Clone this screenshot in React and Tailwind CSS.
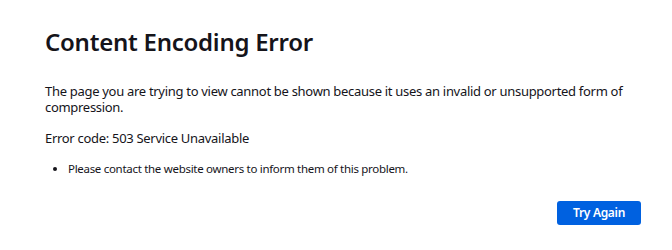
export default function App() {
  return (
    <div className="w-[672px] h-[250px] bg-white text-[#15141a] overflow-hidden" style={{ fontFamily: '"Noto Sans", "Open Sans", sans-serif' }}>
      <div className="ml-[45px] w-[596px] pt-[26px]">
        <h1 className="text-[24px] leading-[32px] font-semibold tracking-[-0.25px]">Content Encoding Error</h1>
        <p className="mt-[25px] text-[13px] leading-[16px] tracking-[-0.3px]">
          The page you are trying to view cannot be shown because it uses an invalid or unsupported form of compression.
        </p>
        <p className="mt-[15px] text-[13px] leading-[17px] tracking-[-0.3px]">Error code: 503 Service Unavailable</p>
        <ul className="mt-[14px] list-disc pl-[23px] text-[11.5px] leading-[15px] tracking-[-0.3px]">
          <li>Please contact the website owners to inform them of this problem.</li>
        </ul>
        <div className="flex justify-end mt-[25px]">
          <button className="w-[84px] h-[24px] rounded-[3px] bg-[#0061e0] text-white text-[12px] font-semibold tracking-[-0.3px]">Try Again</button>
        </div>
      </div>
    </div>
  );
}
